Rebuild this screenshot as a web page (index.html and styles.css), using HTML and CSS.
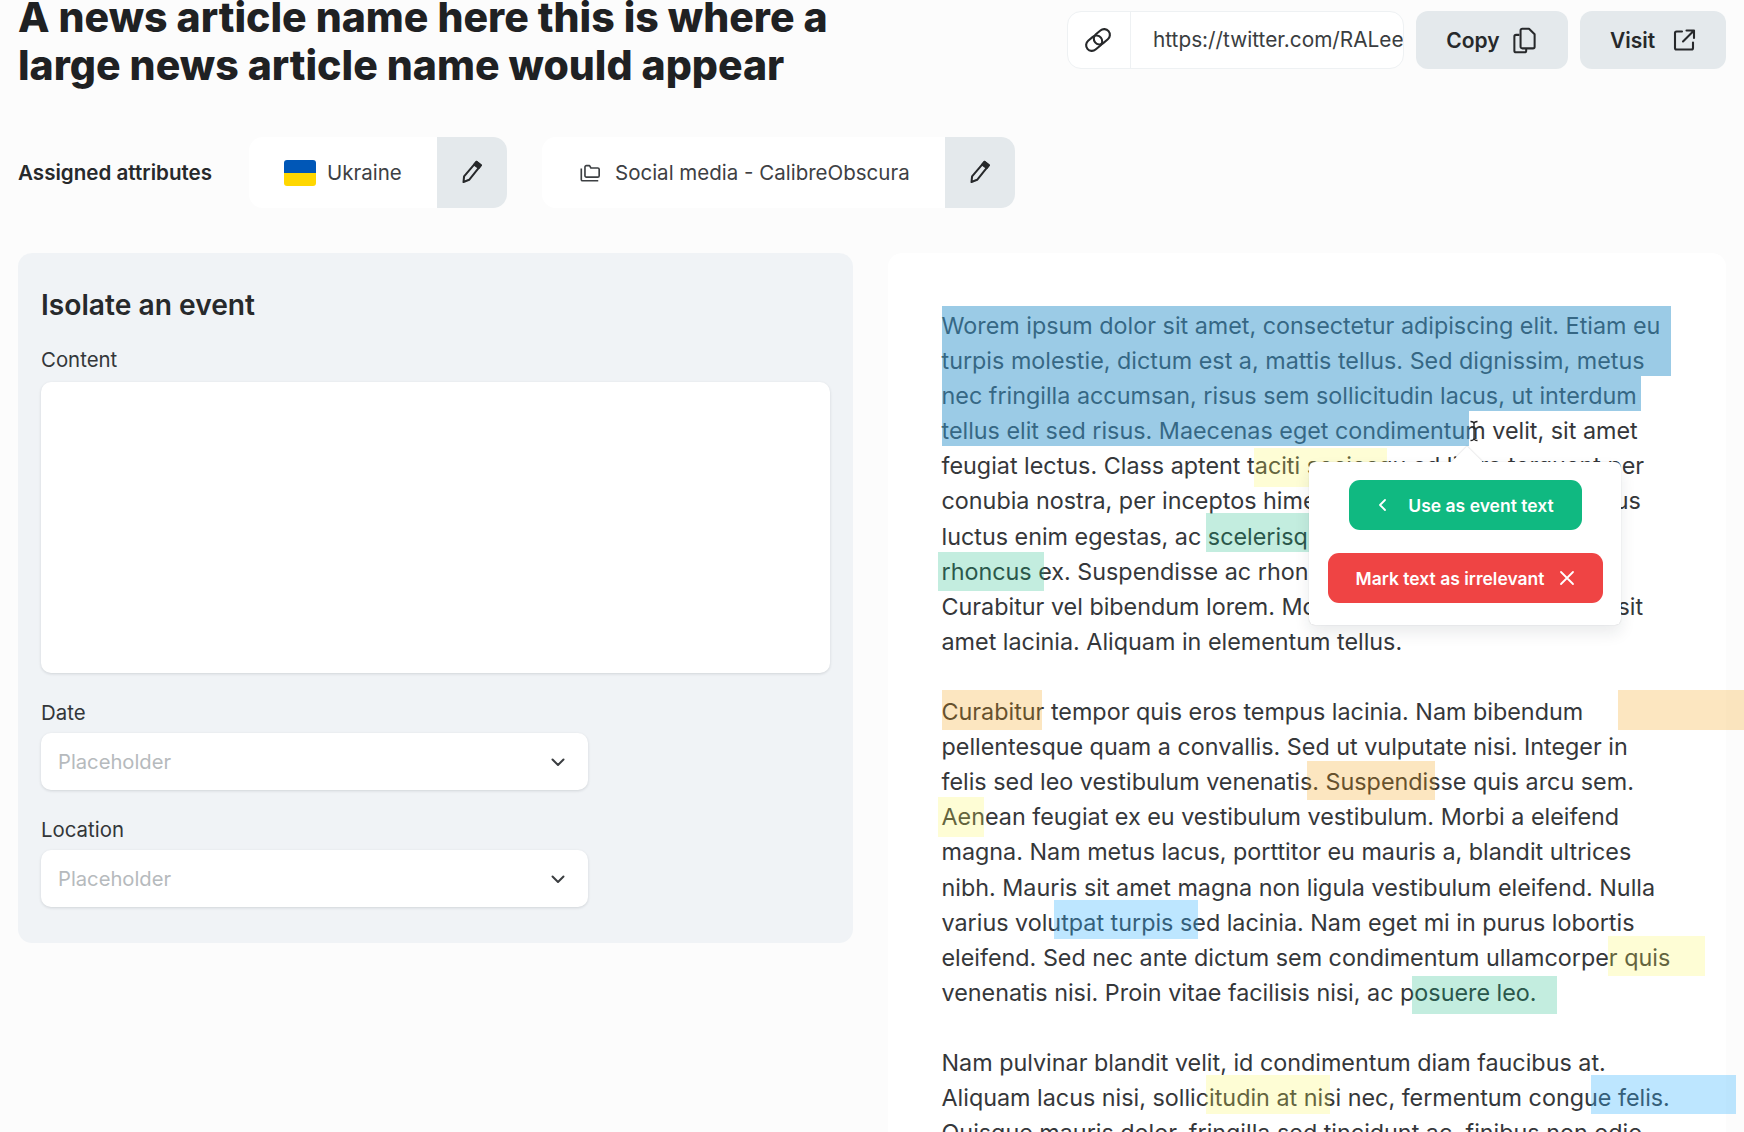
FILE: index.html
```html
<!DOCTYPE html>
<html lang="en">
<head>
<meta charset="utf-8">
<title>Isolate an event</title>
<link rel="stylesheet" href="styles.css">
</head>
<body>
<div class="page">
  <header class="top">
    <h1 class="title">A news article name here this is where a large news article name would appear</h1>
    <div class="actions">
      <div class="link-box">
        <span class="link-icon">
          <svg class="ico-30" viewBox="0 0 24 24" fill="none" stroke="currentColor" stroke-width="1.700"><g transform="rotate(-40 12 12)"><rect x="1" y="7.400" width="14" height="9.200" rx="4.600"/><rect x="9" y="7.400" width="14" height="9.200" rx="4.600"/></g></svg>
        </span>
        <span class="link-url">https://twitter.com/RALee</span>
      </div>
      <button class="btn-grey">Copy
        <svg class="ico-27" viewBox="0 0 24 24" fill="none" stroke="currentColor" stroke-width="1.800" stroke-linejoin="round"><path d="M7.500 7H4.500A1.500 1.500 0 0 0 3 8.500V21a1.500 1.500 0 0 0 1.500 1.500H12a1.500 1.500 0 0 0 1.500-1.500v-2"/><path d="M10 1.500h6l5 5V17.500a1.500 1.500 0 0 1-1.500 1.500H10a1.500 1.500 0 0 1-1.500-1.500V3A1.500 1.500 0 0 1 10 1.500z"/></svg>
      </button>
      <button class="btn-grey btn-visit">Visit
        <svg class="ico-24" viewBox="0 0 24 24" fill="none" stroke="currentColor" stroke-width="2.100" stroke-linecap="round" stroke-linejoin="round"><path d="M10 3.500H4.500A1.500 1.500 0 0 0 3 5v15a1.500 1.500 0 0 0 1.500 1.500h15A1.500 1.500 0 0 0 21 20v-5.500"/><path d="M14.500 2.500H22V10M22 2.500 11 13.500"/></svg>
      </button>
    </div>
  </header>

  <section class="attrs">
    <span class="attrs-label">Assigned attributes</span>
    <div class="pill pill-country">
      <span class="pill-body">
        <span class="flag"></span>
        <span>Ukraine</span>
      </span>
      <button class="pill-edit" aria-label="Edit">
        <svg class="ico-27" viewBox="1 1 24 24" fill="none" stroke="currentColor" stroke-width="1.800" stroke-linejoin="round"><path d="M16.500 3.500 20.500 6.500 10 19.500 5 21.500 5.500 16.500z"/><path d="M16.500 3.500 20.500 6.500 18.500 9 14.500 6z" fill="currentColor"/></svg>
      </button>
    </div>
    <div class="pill pill-source">
      <span class="pill-body pill-body-source">
        <svg class="ico-22" viewBox="0 0 24 24" fill="none" stroke="currentColor" stroke-width="1.800" stroke-linejoin="round"><path d="M2.500 7v12A1.500 1.500 0 0 0 4 20.500h17"/><path d="M6.500 5.500A1.500 1.500 0 0 1 8 4h3.500l1.500 2.500h7.500A1.500 1.500 0 0 1 22 8v7a1.500 1.500 0 0 1-1.500 1.500H8A1.500 1.500 0 0 1 6.500 15z"/></svg>
        <span>Social media - CalibreObscura</span>
      </span>
      <button class="pill-edit" aria-label="Edit">
        <svg class="ico-27" viewBox="1 1 24 24" fill="none" stroke="currentColor" stroke-width="1.800" stroke-linejoin="round"><path d="M16.500 3.500 20.500 6.500 10 19.500 5 21.500 5.500 16.500z"/><path d="M16.500 3.500 20.500 6.500 18.500 9 14.500 6z" fill="currentColor"/></svg>
      </button>
    </div>
  </section>

  <main class="columns">
    <section class="event-panel">
      <h2 class="event-title">Isolate an event</h2>
      <label class="field-label">Content</label>
      <div class="textarea"></div>
      <label class="field-label label-date">Date</label>
      <div class="select">
        <span>Placeholder</span>
        <svg class="ico-18" viewBox="0 0 18 18" fill="none" stroke="currentColor" stroke-width="2" stroke-linecap="round" stroke-linejoin="round"><path d="M3.500 6.500 9 12l5.500-5.500"/></svg>
      </div>
      <label class="field-label label-location">Location</label>
      <div class="select">
        <span>Placeholder</span>
        <svg class="ico-18" viewBox="0 0 18 18" fill="none" stroke="currentColor" stroke-width="2" stroke-linecap="round" stroke-linejoin="round"><path d="M3.500 6.500 9 12l5.500-5.500"/></svg>
      </div>
    </section>

    <article class="article">
      <p>Worem ipsum dolor sit amet, consectetur adipiscing elit. Etiam eu turpis molestie, dictum est a, mattis tellus. Sed dignissim, metus nec fringilla accumsan, risus sem sollicitudin lacus, ut interdum tellus elit sed risus. Maecenas eget condimentum velit, sit amet feugiat lectus. Class aptent taciti sociosqu ad litora torquent per conubia nostra, per inceptos himenaeos. Praesent auctor purus luctus enim egestas, ac scelerisque ante pulvinar. Donec ut rhoncus ex. Suspendisse ac rhoncus nisl, eu tempor urna. Curabitur vel bibendum lorem. Morbi convallis convallis diam sit amet lacinia. Aliquam in elementum tellus.</p>
      <p>Curabitur tempor quis eros tempus lacinia. Nam bibendum pellentesque quam a convallis. Sed ut vulputate nisi. Integer in felis sed leo vestibulum venenatis. Suspendisse quis arcu sem. Aenean feugiat ex eu vestibulum vestibulum. Morbi a eleifend magna. Nam metus lacus, porttitor eu mauris a, blandit ultrices nibh. Mauris sit amet magna non ligula vestibulum eleifend. Nulla varius volutpat turpis sed lacinia. Nam eget mi in purus lobortis eleifend. Sed nec ante dictum sem condimentum ullamcorper quis venenatis nisi. Proin vitae facilisis nisi, ac posuere leo.</p>
      <p>Nam pulvinar blandit velit, id condimentum diam faucibus at. Aliquam lacus nisi, sollicitudin at nisi nec, fermentum congue felis. Quisque mauris dolor, fringilla sed tincidunt ac, finibus non odio.</p>
    </article>
  </main>
</div>

<div class="mark sel sel-1"></div>
<div class="mark sel sel-2"></div>
<div class="mark sel sel-3"></div>
<div class="mark yellow y-1"></div>
<div class="mark green g-1"></div>
<div class="mark green g-2"></div>
<div class="mark orange o-1"></div>
<div class="mark orange o-2"></div>
<div class="mark orange o-3"></div>
<div class="mark yellow y-2"></div>
<div class="mark blue b-1"></div>
<div class="mark yellow y-3"></div>
<div class="mark green g-3"></div>
<div class="mark yellow y-4"></div>
<div class="mark blue b-2"></div>

<svg class="cursor" viewBox="0 0 12 24" fill="none" stroke="#222" stroke-width="1.300"><path d="M2.500 2.500C4.500 2.500 6 3 6 5v14c0 2-1.500 2.500-3.500 2.500M9.500 2.500C7.500 2.500 6 3 6 5M6 19c0 2 1.500 2.500 3.500 2.500"/></svg>

<div class="popup">
  <span class="popup-arrow"></span>
  <button class="pop-btn pop-use">
    <svg class="ico-16" viewBox="0 0 16 16" fill="none" stroke="currentColor" stroke-width="1.800" stroke-linecap="round" stroke-linejoin="round"><path d="M10 3 5 8l5 5"/></svg>
    <span>Use as event text</span>
  </button>
  <button class="pop-btn pop-drop">
    <span>Mark text as irrelevant</span>
    <svg class="ico-16" viewBox="0 0 16 16" fill="none" stroke="currentColor" stroke-width="1.800" stroke-linecap="round"><path d="M2 2l12 12M14 2 2 14"/></svg>
  </button>
</div>
</body>
</html>
```
FILE: styles.css
```css
* { box-sizing: border-box; }
html, body { margin: 0; height: 1132px; overflow: hidden; }
body {
  position: relative;
  background: #fcfcfc;
  color: #27292b;
  font-family: Inter, "Liberation Sans", sans-serif;
}
button { font-family: inherit; border: 0; cursor: pointer; }
svg { display: block; flex: none; }
.ico-16 { width: 16px; height: 16px; }
.ico-18 { width: 18px; height: 18px; }
.ico-22 { width: 22px; height: 22px; }
.ico-24 { width: 24px; height: 24px; }
.ico-27 { width: 27px; height: 27px; }
.ico-30 { width: 30px; height: 30px; }

.page { padding: 0 18px; }

.top { display: flex; justify-content: space-between; align-items: flex-start; }
.title {
  width: 880px;
  margin: -7px 0 0;
  font-size: 41px;
  line-height: 48px;
  font-weight: 800;
  color: #1f2123;
}
.actions { display: flex; gap: 12px; margin-top: 11px; }
.link-box {
  display: flex;
  width: 337px;
  height: 58px;
  background: #fff;
  border: 1px solid #eef1f3;
  border-radius: 14px;
  overflow: hidden;
}
.link-icon {
  display: flex;
  align-items: center;
  justify-content: center;
  width: 63px;
  flex: none;
  padding-right: 2px;
  border-right: 1px solid #eef1f3;
}
.link-url {
  padding-left: 22px;
  font-size: 20.800px;
  line-height: 56px;
  white-space: nowrap;
  color: #3a3d40;
}
.btn-grey {
  display: flex;
  align-items: center;
  justify-content: center;
  gap: 11px;
  width: 152px;
  height: 58px;
  background: #e4e9ec;
  border-radius: 12px;
  font-size: 21px;
  font-weight: 600;
  color: #27292b;
}
.btn-visit { width: 146px; gap: 17px; }

.attrs { display: flex; align-items: center; margin-top: 48px; height: 71px; }
.attrs-label { width: 231px; font-size: 20.600px; font-weight: 600; }
.pill { display: flex; height: 71px; background: #fff; border-radius: 14px; overflow: hidden; }
.pill-country { width: 258px; margin-right: 35px; }
.pill-source { width: 473px; }
.pill-body { flex: 1; display: flex; align-items: center; gap: 11px; padding-left: 35px; font-size: 20.500px; color: #3d4043; }
.pill-body-source { padding-left: 37px; gap: 14px; }
.pill-edit {
  display: flex;
  align-items: center;
  justify-content: center;
  width: 70px;
  background: #e4e9ec;
  color: #27292b;
}
.flag {
  width: 32px;
  height: 26px;
  border-radius: 3px;
  background: linear-gradient(#0057b7 50%, #ffd700 50%);
}

.columns { display: flex; gap: 35px; margin-top: 45px; align-items: flex-start; }
.event-panel {
  width: 835px;
  height: 690px;
  flex: none;
  padding: 36px 23px 0;
  background: #f0f3f6;
  border-radius: 14px;
}
.event-title { margin: 0; font-size: 28.200px; line-height: 32px; font-weight: 600; color: #27292b; }
.field-label { display: block; margin-top: 26px; font-size: 20.400px; line-height: 26px; color: #333639; }
.label-date { margin-top: 27px; }
.label-location { margin-top: 27px; }
.textarea {
  height: 291px;
  margin-top: 9px;
  background: #fff;
  border-radius: 10px;
  box-shadow: 0 1px 3px rgba(20, 30, 40, .14);
}
.select {
  display: flex;
  align-items: center;
  justify-content: space-between;
  width: 547px;
  height: 57px;
  margin-top: 7px;
  padding: 0 21px 0 17px;
  background: #fff;
  border-radius: 10px;
  box-shadow: 0 1px 3px rgba(20, 30, 40, .14);
  font-size: 20.200px;
  color: #b6babd;
}
.select svg { color: #3a3d40; }

.article {
  flex: 1;
  height: 900px;
  padding: 55px 54px 0 53.500px;
  background: #fff;
  border-radius: 14px 14px 0 0;
  font-size: 23.330px;
  line-height: 35.100px;
  color: #35373a;
}
.article p { margin: 0 0 35.100px; }

.mark { position: absolute; }
.sel { background: rgba(56, 152, 206, .5); }
.yellow { background: rgba(250, 245, 80, .24); }
.green { background: rgba(16, 185, 129, .25); }
.orange { background: rgba(245, 158, 11, .26); }
.blue { background: rgba(56, 178, 255, .33); }
.sel-1 { left: 942px; top: 306px; width: 729px; height: 70px; }
.sel-2 { left: 942px; top: 376px; width: 699px; height: 35px; }
.sel-3 { left: 942px; top: 411px; width: 527px; height: 35px; }
.y-1 { left: 1254px; top: 448px; width: 133px; height: 39px; }
.g-1 { left: 1206px; top: 513px; width: 120px; height: 39px; }
.g-2 { left: 938px; top: 552px; width: 106px; height: 39px; }
.o-1 { left: 942px; top: 690px; width: 100px; height: 40px; }
.o-2 { left: 1618px; top: 690px; width: 126px; height: 40px; }
.o-3 { left: 1307px; top: 761px; width: 128px; height: 39px; }
.y-2 { left: 938px; top: 797px; width: 46px; height: 40px; }
.b-1 { left: 1054px; top: 900px; width: 144px; height: 39px; }
.y-3 { left: 1608px; top: 936px; width: 97px; height: 40px; }
.g-3 { left: 1412px; top: 976px; width: 145px; height: 38px; }
.y-4 { left: 1206px; top: 1075px; width: 124px; height: 39px; }
.b-2 { left: 1591px; top: 1075px; width: 145px; height: 39px; }

.cursor { position: absolute; left: 1468px; top: 419px; width: 12px; height: 24px; }

.popup {
  position: absolute;
  left: 1309px;
  top: 462px;
  width: 312px;
  height: 163px;
  display: flex;
  flex-direction: column;
  align-items: center;
  padding-top: 18px;
  gap: 23px;
  background: #fff;
  border-radius: 6px;
  box-shadow: 0 0 1px rgba(20, 30, 40, .25), 0 8px 16px rgba(20, 30, 40, .09);
}
.popup-arrow {
  position: absolute;
  left: 147px;
  top: -11px;
  width: 22px;
  height: 22px;
  background: #fff;
  transform: rotate(45deg);
  box-shadow: -1px -1px 1px rgba(20, 30, 40, .08);
}
.pop-btn {
  position: relative;
  display: flex;
  align-items: center;
  justify-content: center;
  height: 50px;
  border-radius: 11px;
  color: #fff;
  font-size: 17.500px;
  font-weight: 600;
  white-space: nowrap;
}
.pop-use { width: 233px; height: 50px; gap: 17px; padding-left: 5px; background: #10b981; }
.pop-drop { width: 275px; gap: 15px; padding-right: 5px; background: #ef4444; }
```
